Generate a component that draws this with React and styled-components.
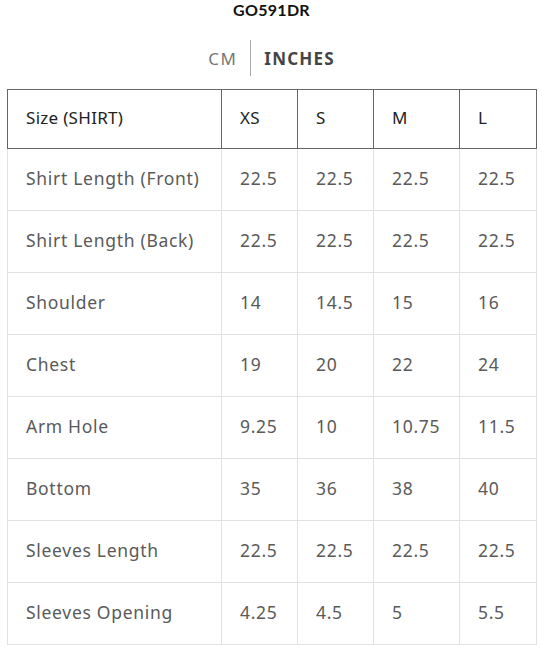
import React from "react";
import styled, { createGlobalStyle } from "styled-components";

const Global = createGlobalStyle`
  html, body { margin: 0; padding: 0; background: #fff; }
  body { font-family: "Noto Sans", "Open Sans", sans-serif; }
`;

const Page = styled.div`
  width: 542px;
  padding: 0 0 0 7px;
  box-sizing: border-box;
`;

const Title = styled.div`
  font-family: "Lato", "Noto Sans", sans-serif;
  font-weight: 700;
  font-size: 16px;
  color: #111;
  text-align: center;
  width: 529px;
  height: 21px;
  line-height: 20px;
  letter-spacing: 0.3px;
`;

const Units = styled.div`
  display: flex;
  justify-content: center;
  align-items: center;
  width: 529px;
  height: 36px;
  margin-top: 19px;
  margin-bottom: 13px;
`;

const Unit = styled.span`
  font-size: 17px;
  letter-spacing: ${(p) => (p.$active ? "1.2px" : "1.5px")};
  color: ${(p) => (p.$active ? "#444" : "#777")};
  font-weight: ${(p) => (p.$active ? 700 : 400)};
`;

const Divider = styled.span`
  width: 1px;
  height: 36px;
  background: #aaa;
  margin: 0 13px;
`;

const Table = styled.table`
  border-collapse: collapse;
  width: 529px;
  table-layout: fixed;
`;

const HeadCell = styled.th`
  border: 1px solid #666;
  height: 54px;
  padding: 0 0 4px 18px;
  text-align: left;
  font-weight: 400;
  font-size: 17px;
  color: #222;
  letter-spacing: 0.3px;
`;

const Cell = styled.td`
  border: 1px solid #e2e2e2;
  height: 57px;
  padding: 0 0 4px 18px;
  font-size: 17.5px;
  color: #5a5a5a;
  letter-spacing: 0.7px;
`;

const widths = [214, 76, 76, 86, 77];
const head = ["Size (SHIRT)", "XS", "S", "M", "L"];
const rows = [
  ["Shirt Length (Front)", "22.5", "22.5", "22.5", "22.5"],
  ["Shirt Length (Back)", "22.5", "22.5", "22.5", "22.5"],
  ["Shoulder", "14", "14.5", "15", "16"],
  ["Chest", "19", "20", "22", "24"],
  ["Arm Hole", "9.25", "10", "10.75", "11.5"],
  ["Bottom", "35", "36", "38", "40"],
  ["Sleeves Length", "22.5", "22.5", "22.5", "22.5"],
  ["Sleeves Opening", "4.25", "4.5", "5", "5.5"],
];

export default function App() {
  return (
    <Page>
      <Global />
      <Title>GO591DR</Title>
      <Units>
        <Unit>CM</Unit>
        <Divider />
        <Unit $active>INCHES</Unit>
      </Units>
      <Table>
        <colgroup>
          {widths.map((w, i) => (
            <col key={i} style={{ width: w }} />
          ))}
        </colgroup>
        <thead>
          <tr>
            {head.map((h) => (
              <HeadCell key={h}>{h}</HeadCell>
            ))}
          </tr>
        </thead>
        <tbody>
          {rows.map((r) => (
            <tr key={r[0]}>
              {r.map((c, i) => (
                <Cell key={i}>{c}</Cell>
              ))}
            </tr>
          ))}
        </tbody>
      </Table>
    </Page>
  );
}
